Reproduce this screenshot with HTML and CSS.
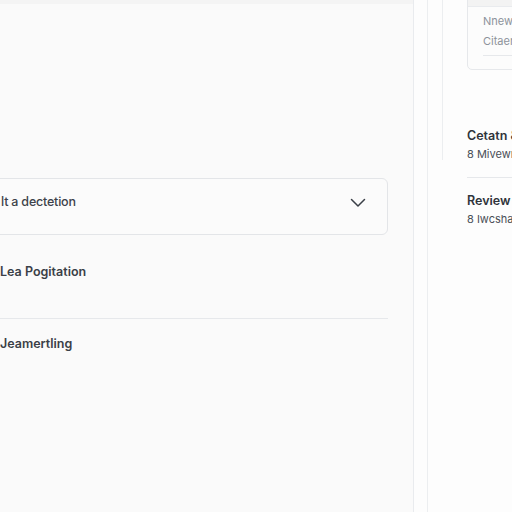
FILE: index.html
```html
<!DOCTYPE html>
<html>
<head>
<meta charset="utf-8">
<link rel="stylesheet" href="styles.css">
</head>
<body>
<div class="page">
  <main class="main">
    <div class="topband"></div>
    <div class="select">
      <span class="select-label">lt a dectetion</span>
      <svg class="chev" width="16" height="10" viewBox="0 0 16 10"><path d="M1.5 1.5 L8 8 L14.5 1.5" fill="none" stroke="#3a3f47" stroke-width="1.5" stroke-linecap="round" stroke-linejoin="round"/></svg>
    </div>
    <div class="section-title">Lea Pogitation</div>
    <div class="divider"></div>
    <div class="section-title second">Jeamertling</div>
  </main>
  <div class="gutter"></div>
  <aside class="aside">
    <div class="rail"></div>
    <div class="aside-content">
      <div class="card">
        <div class="card-head"></div>
        <div class="card-body">
          <div class="card-line">Nnewr</div>
          <div class="card-line">Citaen</div>
          <div class="card-rule"></div>
        </div>
      </div>
      <div class="item">
        <div class="item-title">Cetatn &amp;</div>
        <div class="item-sub">8 Mivewn</div>
      </div>
      <div class="item-rule"></div>
      <div class="item">
        <div class="item-title">Review r</div>
        <div class="item-sub">8 Iwcshan</div>
      </div>
    </div>
  </aside>
</div>
</body>
</html>
```
FILE: styles.css
```css
* { box-sizing: border-box; }
html, body { margin: 0; padding: 0; }
body {
  width: 512px;
  height: 512px;
  overflow: hidden;
  font-family: Inter, "Noto Sans", "Liberation Sans", sans-serif;
  background: #fcfcfc;
}
.page {
  display: flex;
  height: 512px;
  overflow: hidden;
}
.main {
  width: 414px;
  flex: none;
  background: #fafafa;
  border-right: 1px solid #e9ebee;
  display: flex;
  flex-direction: column;
}
.topband {
  height: 4px;
  background: #f4f4f4;
  margin-bottom: 174px;
}
.select {
  margin-left: -20px;
  width: 408px;
  height: 57px;
  border: 1px solid #e3e5e8;
  border-radius: 6px;
  background: #fbfbfb;
  display: flex;
  align-items: flex-start;
  justify-content: space-between;
  padding: 15px 21px 0 20px;
}
.select-label {
  font-size: 12.5px;
  line-height: 16px;
  color: #3d424a;
  font-weight: 500;
  letter-spacing: -0.2px;
}
.chev { display: block; margin-top: 4px; }
.section-title {
  margin-top: 29px;
  font-size: 12.5px;
  font-weight: 600;
  color: #3a3f47;
  line-height: 16px;
}
.section-title.second {
  margin-top: 17px;
}
.divider {
  margin-top: 38px;
  width: 388px;
  height: 1px;
  background: #e6e8eb;
}
.gutter {
  width: 14px;
  flex: none;
  background: #fdfdfd;
  border-right: 1px solid #eceef0;
}
.aside {
  flex: 1;
  min-width: 0;
  display: flex;
  background: #fdfdfd;
  overflow: hidden;
}
.rail {
  width: 15px;
  flex: none;
  height: 160px;
  border-right: 1px solid #eceef0;
}
.aside-content {
  flex: none;
  width: 120px;
  padding-left: 24px;
  white-space: nowrap;
}
.card {
  margin-top: -10px;
  width: 100px;
  height: 80px;
  border: 1px solid #e6e8eb;
  border-radius: 5px;
  background: #fcfcfc;
  overflow: hidden;
}
.card-head {
  height: 16px;
  background: #f3f3f3;
  border-bottom: 1px solid #e9ebee;
}
.card-body {
  padding: 4px 0 0 15px;
}
.card-line {
  font-size: 11px;
  line-height: 20px;
  color: #8d939b;
}
.card-rule {
  margin-top: 4px;
  height: 1px;
  background: #e6e8eb;
}
.item {
  margin-top: 58px;
}
.item-title {
  font-size: 12.5px;
  font-weight: 600;
  color: #2f343b;
  line-height: 16px;
}
.item-sub {
  margin-top: 3px;
  font-size: 11px;
  color: #4a4f57;
  line-height: 14px;
}
.item-rule {
  margin-top: 16px;
  height: 1px;
  background: #e6e8eb;
}
.item-rule + .item {
  margin-top: 15px;
}
```
